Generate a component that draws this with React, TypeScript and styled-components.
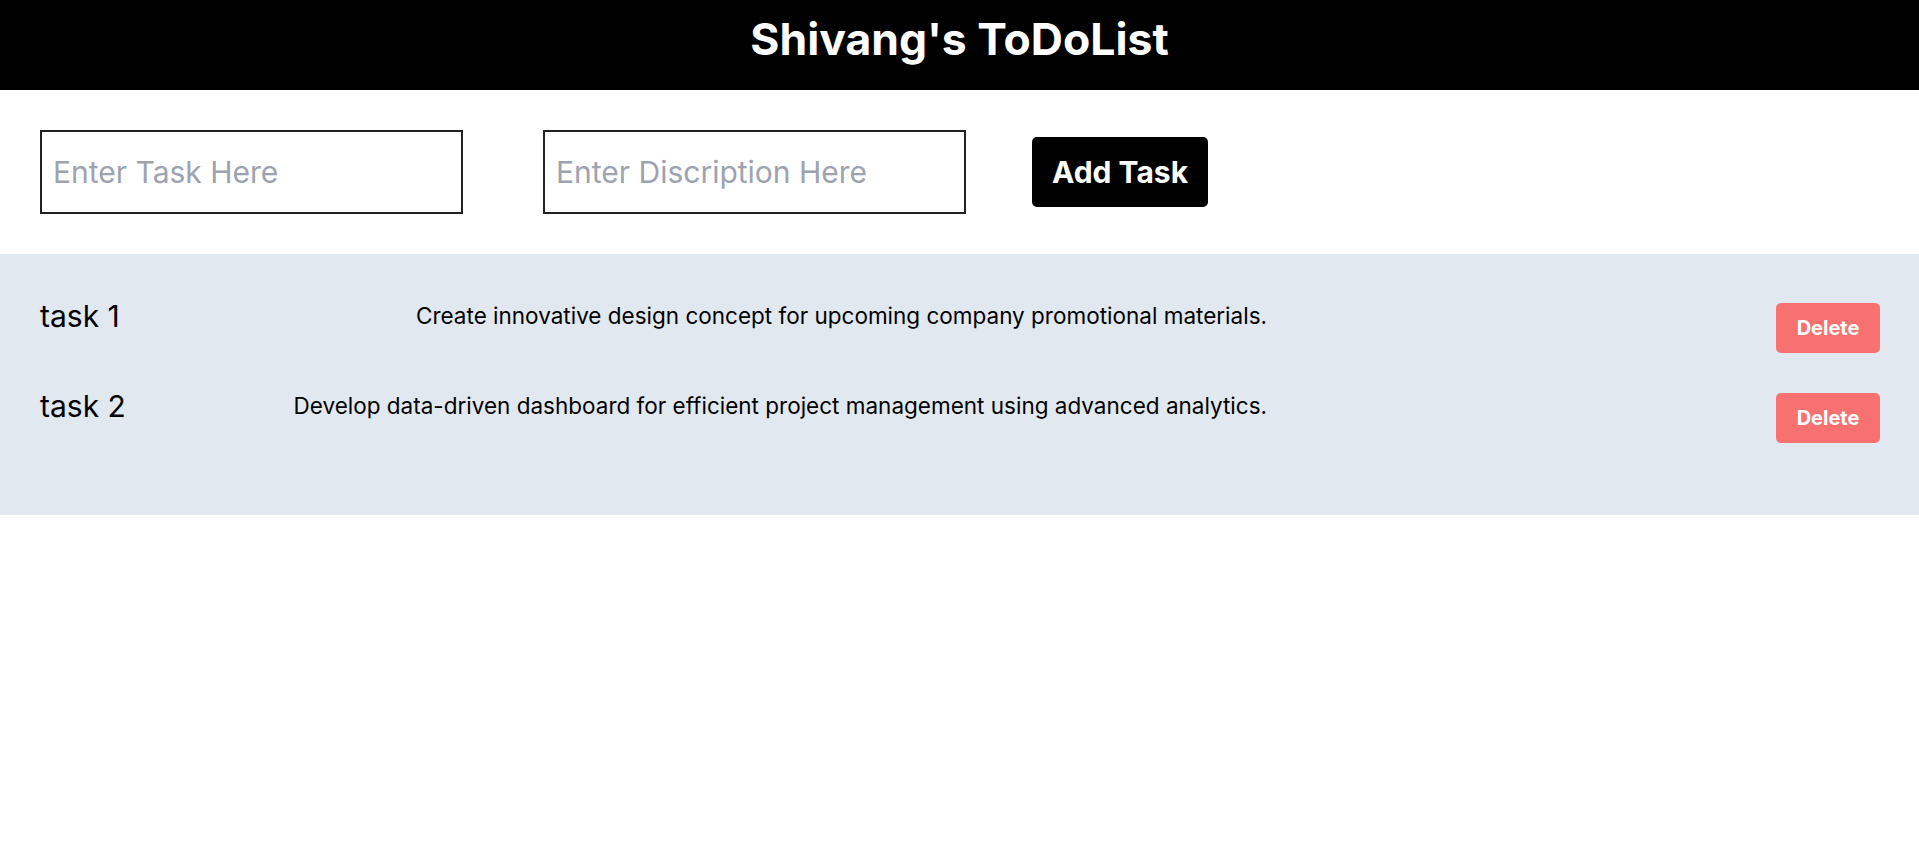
import styled, { createGlobalStyle } from "styled-components";

const tasks = [
  {
    id: 1,
    title: "task 1",
    desc: "Create innovative design concept for upcoming company promotional materials.",
  },
  {
    id: 2,
    title: "task 2",
    desc: "Develop data-driven dashboard for efficient project management using advanced analytics.",
  },
];

const GlobalStyle = createGlobalStyle`
  * {
    box-sizing: border-box;
  }

  body {
    margin: 0;
    background: #ffffff;
    font-family: Inter, "Noto Sans", sans-serif;
    color: #000000;
  }
`;

const Header = styled.header`
  background: #000000;
  height: 90px;
  padding-top: 17px;
  text-align: center;

  h1 {
    margin: 0;
    color: #ffffff;
    font-size: 44.5px;
    font-weight: 700;
    line-height: 1;
  }
`;

const Form = styled.form`
  display: flex;
  align-items: center;
  gap: 66px;
  padding: 40px;
`;

const TaskInput = styled.input<{ $spaced?: boolean }>`
  width: 423px;
  height: 84px;
  margin-right: ${(p) => (p.$spaced ? "14px" : "0")};
  padding: 0 11px;
  border: 2px solid #222222;
  border-radius: 0;
  font-family: inherit;
  font-size: 30px;
  color: #111111;
  outline: none;

  &::placeholder {
    color: #9ca3af;
  }
`;

const AddBtn = styled.button`
  width: 176px;
  height: 70px;
  border: none;
  border-radius: 5px;
  background: #000000;
  color: #ffffff;
  font-family: inherit;
  font-size: 30px;
  font-weight: 700;
  cursor: pointer;
`;

const TaskList = styled.section`
  display: flex;
  flex-direction: column;
  gap: 40px;
  min-height: 261px;
  padding: 49px 39px 72px 40px;
  background: #e2e8f0;
`;

const TaskRow = styled.article`
  display: flex;
  align-items: flex-start;
  justify-content: space-between;
`;

const TaskText = styled.div`
  display: flex;
  justify-content: space-between;
  width: 1227px;
`;

const TaskTitle = styled.h3`
  margin: -2px 0 0;
  font-size: 30px;
  font-weight: 400;
  line-height: 1;
`;

const TaskDesc = styled.p`
  margin: 0;
  padding-top: 2px;
  font-size: 22.5px;
  line-height: 1;
  text-align: right;
`;

const DeleteBtn = styled.button`
  width: 104px;
  height: 50px;
  border: none;
  border-radius: 5px;
  background: #f87171;
  color: #ffffff;
  font-family: inherit;
  font-size: 20px;
  font-weight: 700;
  cursor: pointer;
`;

export default function App() {
  return (
    <>
      <GlobalStyle />
      <Header>
        <h1>Shivang's ToDoList</h1>
      </Header>
      <Form onSubmit={(e) => e.preventDefault()}>
        <TaskInput $spaced placeholder="Enter Task Here" />
        <TaskInput placeholder="Enter Discription Here" />
        <AddBtn type="submit">Add Task</AddBtn>
      </Form>
      <TaskList>
        {tasks.map((task) => (
          <TaskRow key={task.id}>
            <TaskText>
              <TaskTitle>{task.title}</TaskTitle>
              <TaskDesc>{task.desc}</TaskDesc>
            </TaskText>
            <DeleteBtn>Delete</DeleteBtn>
          </TaskRow>
        ))}
      </TaskList>
    </>
  );
}
